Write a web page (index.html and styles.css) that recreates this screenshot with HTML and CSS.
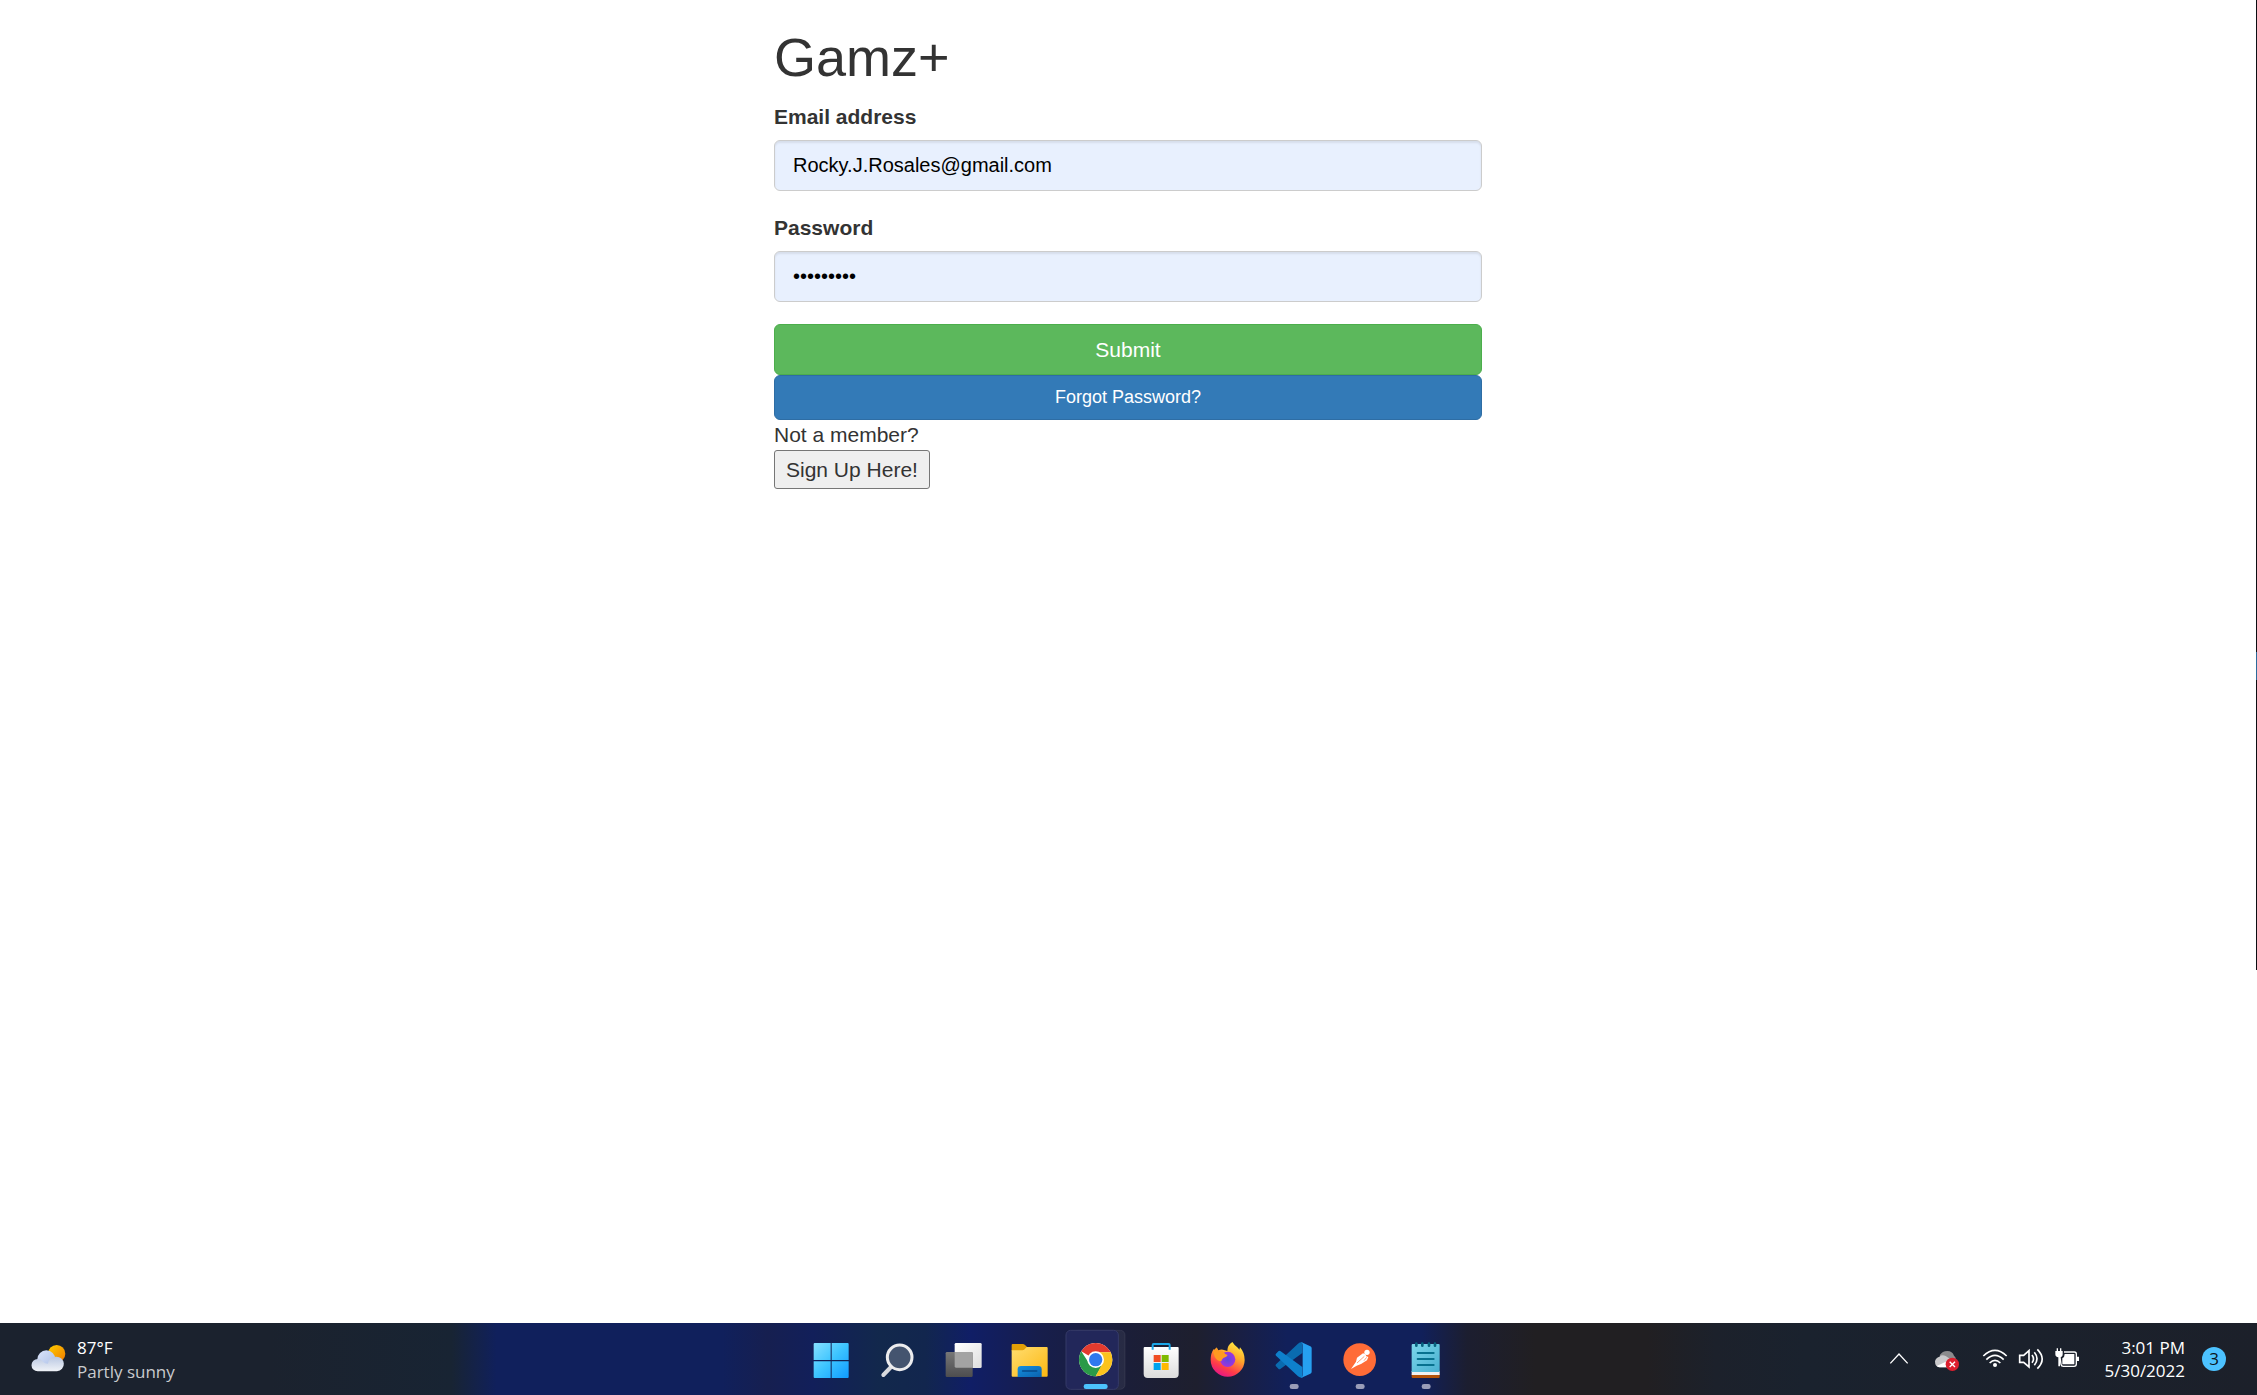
FILE: index.html
```html
<!DOCTYPE html>
<html lang="en">
<head>
<meta charset="utf-8">
<title>Gamz+</title>
<link rel="stylesheet" href="styles.css">
</head>
<body>
<main class="page">
  <div class="column">
    <h1 class="title">Gamz+</h1>
    <form class="login">
      <div class="form-group">
        <label for="email">Email address</label>
        <input class="form-control" id="email" type="email" value="Rocky.J.Rosales@gmail.com">
      </div>
      <div class="form-group">
        <label for="password">Password</label>
        <input class="form-control" id="password" type="password" value="password1">
      </div>
      <button class="btn btn-success" type="button">Submit</button>
      <button class="btn btn-primary" type="button">Forgot Password?</button>
    </form>
    <p class="note">Not a member?</p>
    <button class="signup" type="button">Sign Up Here!</button>
  </div>
  <div class="edge"></div>
</main>

<footer class="taskbar">
  <div class="weather">
    <svg class="weather-icon" viewBox="0 0 108 84" aria-hidden="true">
      <defs>
        <linearGradient id="sun" x1="0" y1="0" x2="1" y2="1"><stop offset="0" stop-color="#ffd000"/><stop offset="1" stop-color="#f07800"/></linearGradient>
        <linearGradient id="cloud" x1="0" y1="0" x2="1" y2="1"><stop offset="0" stop-color="#dbe5fa"/><stop offset="1" stop-color="#a9bde6"/></linearGradient>
        <linearGradient id="puff" x1="0" y1="0" x2="0" y2="1"><stop offset="0" stop-color="#b9c7e2"/><stop offset="1" stop-color="#f0f3f8"/></linearGradient>
      </defs>
      <circle cx="77" cy="26" r="26" fill="url(#sun)"/>
      <circle cx="46" cy="43" r="27" fill="url(#cloud)"/>
      <path d="M20 42a19 19 0 0 1 17 9q4 5 14 5 3-21 24-21a22 22 0 0 1 3 44H20a18 18 0 0 1 0-37z" fill="url(#puff)"/>
    </svg>
    <div class="weather-text"><span>87°F</span><span class="dim">Partly sunny</span></div>
  </div>

  <nav class="apps">
    <button class="app" type="button" aria-label="Start">
      <svg viewBox="25 24 198 216">
        <defs><linearGradient id="win" gradientUnits="userSpaceOnUse" x1="72" y1="84" x2="177" y2="189"><stop offset="0" stop-color="#86e0ff"/><stop offset=".5" stop-color="#3cc4ff"/><stop offset="1" stop-color="#0f9bff"/></linearGradient></defs>
        <path fill="url(#win)" d="M75 84h48v51H72V87a3 3 0 0 1 3-3zM126 84h48a3 3 0 0 1 3 3v48h-51zM72 139h51v50H75a3 3 0 0 1-3-3zM126 139h51v47a3 3 0 0 1-3 3h-48z"/>
      </svg>
    </button>
    <button class="app" type="button" aria-label="Search">
      <svg viewBox="223 24 198 216">
        <path d="M304 156l-23 24" stroke="#d8dade" stroke-width="12" stroke-linecap="round"/>
        <circle cx="330" cy="127" r="37" fill="#44546f" stroke="#ececee" stroke-width="9"/>
      </svg>
    </button>
    <button class="app" type="button" aria-label="Task view">
      <svg viewBox="421 24 198 216">
        <defs><linearGradient id="tvb" x1="0" y1="0" x2="0" y2="1"><stop offset="0" stop-color="#777"/><stop offset="1" stop-color="#4d4d4f"/></linearGradient>
        <linearGradient id="tvf" x1="0" y1="0" x2="1" y2="1"><stop offset="0" stop-color="#fff"/><stop offset="1" stop-color="#dedede"/></linearGradient></defs>
        <rect x="495" y="84" width="81" height="75" rx="4" fill="url(#tvf)"/>
        <rect x="468" y="111" width="81" height="75" rx="4" fill="url(#tvb)"/>
        <path d="M495 111h51a3 3 0 0 1 3 3v44h-50a4 4 0 0 1-4-4z" fill="#a3a3a3"/>
      </svg>
    </button>
    <button class="app" type="button" aria-label="File Explorer">
      <svg viewBox="619 24 198 216">
        <defs><linearGradient id="fold" x1="0" y1="0" x2="1" y2="1"><stop offset="0" stop-color="#ffdd70"/><stop offset="1" stop-color="#fcb812"/></linearGradient>
        <linearGradient id="tray" x1="0" y1="0" x2="1" y2="1"><stop offset="0" stop-color="#1490df"/><stop offset="1" stop-color="#0b61ad"/></linearGradient></defs>
        <path d="M666 90q0-3 3-3h30q4 0 7 3l7 7v12h-47z" fill="#e29f06"/>
        <path d="M666 106h32q4 0 7-3l6-7h60q3 0 3 3v83q0 3-3 3H669q-3 0-3-3z" fill="url(#fold)"/>
        <path d="M684 186v-23q0-10 10-10h52q10 0 10 10v23z" fill="url(#tray)"/>
        <path d="M699 168h42" stroke="#064a8a" stroke-width="5" stroke-linecap="round"/>
      </svg>
    </button>
    <button class="app" type="button" aria-label="Chrome">
      <svg viewBox="817 24 198 216">
        <rect x="850" y="46" width="156" height="177" rx="14" fill="#fff" fill-opacity=".06" stroke="#fff" stroke-opacity=".07" stroke-width="3"/>
        <rect x="829" y="46" width="157" height="177" rx="14" fill="#22275a" stroke="#353a68" stroke-width="3"/>
        <circle cx="918" cy="134" r="50" fill="#fff"/>
        <path d="M918 134L874.700 109A50 50 0 0 1 961.300 109L964 112H918z" fill="#e33b2e"/>
        <path d="M874.700 109A50 50 0 0 0 918 184L940 146 918 134 899 146z" fill="#2a9a48"/>
        <path d="M918 112h45A50 50 0 0 1 918 184L938 146z" fill="#fcc31e"/>
        <circle cx="918" cy="134" r="25" fill="#fff"/><circle cx="918" cy="134" r="20" fill="#2f78ee"/>
        <rect x="882" y="207" width="72" height="15" rx="7" fill="#4cc2ff"/>
      </svg>
    </button>
    <button class="app" type="button" aria-label="Microsoft Store">
      <svg viewBox="25 24 198 216">
        <defs><linearGradient id="bag" x1="0" y1="0" x2="0" y2="1"><stop offset="0" stop-color="#fff"/><stop offset="1" stop-color="#dcdcdc"/></linearGradient></defs>
        <path d="M75 96h99q3 0 3 3v78q0 12-12 12H84q-12 0-12-12V99q0-3 3-3z" fill="url(#bag)"/>
        <path d="M99 104V90q0-3 3-3h45q3 0 3 3v14" fill="none" stroke="#1ba7e8" stroke-width="6"/>
        <path d="M102 120h21v21h-21z" fill="#f04e23"/><path d="M126 120h21v21h-21z" fill="#7fba00"/>
        <path d="M102 144h21v21h-21z" fill="#00a3ee"/><path d="M126 144h21v21h-21z" fill="#ffb900"/>
      </svg>
    </button>
    <button class="app" type="button" aria-label="Firefox">
      <svg viewBox="223 24 198 216">
        <defs><linearGradient id="fx" x1=".8" y1="0" x2=".3" y2="1"><stop offset="0" stop-color="#fff044"/><stop offset=".4" stop-color="#ffa62a"/><stop offset=".75" stop-color="#ff3c48"/><stop offset="1" stop-color="#e4148a"/></linearGradient>
        <radialGradient id="fxg"><stop offset="0" stop-color="#5b48e0"/><stop offset="1" stop-color="#a034dc"/></radialGradient></defs>
        <path d="M338 81q6 9 14 15 4 3 7 8l2-7q14 16 14 38a51 50 0 0 1-102 0q0-22 10-34l2 6 6-10 5 9q6-3 14-2l13 4q0-18 15-27z" fill="url(#fx)"/>
        <circle cx="324" cy="133" r="23" fill="url(#fxg)"/>
        <path d="M280 108l9-9 7 9q10-2 16 3 3 7 12 9-2 6-13 9-5 4-6 10-14-2-20-14z" fill="#ff9a20"/>
      </svg>
    </button>
    <button class="app" type="button" aria-label="Visual Studio Code">
      <svg viewBox="421 24 198 216">
        <path d="M548 82v32l-65 47q-4 3-7 0l-7-7q-3-3 0-6l66-62q6-5 13-4z" fill="#0a6bb0"/>
        <path d="M548 188v-32l-65-47q-4-3-7 0l-7 7q-3 3 0 6l66 62q6 5 13 4z" fill="#0e80cc"/>
        <path d="M544 81l28 13q4 2 4 6v70q0 4-4 6l-28 13q5-3 5-8V89q0-5-5-8z" fill="#26a0f0"/>
        <rect x="510" y="207" width="27" height="15" rx="7" fill="#9a9db8"/>
      </svg>
    </button>
    <button class="app" type="button" aria-label="Postman">
      <svg viewBox="619 24 198 216">
        <circle cx="720" cy="134" r="49" fill="#ff6c37"/>
        <circle cx="742" cy="112" r="8" fill="#fff"/>
        <path d="M712 128l18-13 7 2 3 7 6 2-4 10-18 11-13 5-17 10 15-22z" fill="#fff"/>
        <path d="M712 144l22-20M733 137l8-10" stroke="#ff6c37" stroke-width="2"/>
        <rect x="708" y="207" width="27" height="15" rx="7" fill="#9a9db8"/>
      </svg>
    </button>
    <button class="app" type="button" aria-label="Notepad">
      <svg viewBox="817 24 198 216">
        <defs><linearGradient id="note" x1="0" y1="0" x2="1" y2="1"><stop offset="0" stop-color="#7cd6ea"/><stop offset="1" stop-color="#48afd0"/></linearGradient></defs>
        <path d="M876 176h84v10q0 3-3 3h-78q-3 0-3-3z" fill="#b45309"/><path d="M876 168h84v12h-84z" fill="#f0f0f0"/>
        <path d="M876 90q0-3 3-3h78q3 0 3 3v81h-84z" fill="url(#note)"/>
        <path d="M894 114h48M894 132h48M894 150h48" stroke="#08718f" stroke-width="6" stroke-linecap="round"/>
        <path d="M890 86v6M908 86v6M928 86v6M946 86v6" stroke="#07627e" stroke-width="8" stroke-linecap="round"/>
        <rect x="906" y="207" width="27" height="15" rx="7" fill="#9a9db8"/>
      </svg>
    </button>
  </nav>

  <div class="tray">
    <svg class="chevron" viewBox="84 93 66 78" fill="none" stroke="#fff" stroke-width="4"><path d="M91 145l26-28 26 28"/></svg>
    <svg class="tray-icon" viewBox="222 93 78 78">
      <path d="M239 121q8-13 23-13 15 0 20 14 6 3 6 14h-40z" fill="#8b8b8d"/>
      <path d="M237 157q-12-2-12-18 2-11 13-14 8-7 19-2l22 14-8 20z" fill="#c9c9cb"/>
      <path d="M230 153l34-16 10 20h-34q-6 0-10-4z" fill="#fff"/>
      <circle cx="277" cy="148" r="20" fill="#dc1f2e"/><path d="M269 140l16 16M285 140l-16 16" stroke="#fff" stroke-width="4"/>
    </svg>
    <div class="status">
      <svg class="tray-icon" viewBox="366 93 78 78" fill="none" stroke="#fff" stroke-width="5"><path d="M370 123q35-34 70 0M379 134q26-26 52 0M389 144q16-16 32 0"/><circle cx="405" cy="150" r="6" fill="#fff" stroke="none"/></svg>
      <svg class="tray-icon" viewBox="474 93 78 78" fill="none" stroke="#fff" stroke-width="5"><path d="M479 121h12l16-14v49l-16-14h-12zM516 120q9 12 0 23M523 112q16 19 0 39M532 103q29 29 0 58"/></svg>
      <svg class="tray-icon" viewBox="582 93 78 78"><path d="M612 111h31q6 0 6 6v30q0 7-7 7h-32q-6 0-7-6l-3-22" fill="none" stroke="#fff" stroke-width="4"/><path d="M614 117h29v31h-36v-18q7-3 7-13z" fill="#fff"/><path d="M651 125h6v13h-6zM586 108h22v10q0 8-8 9v27h-5v-27q-9-1-9-9zM590 100h4v9h-4zM600 100h4v9h-4z" fill="#fff"/></svg>
    </div>
    <div class="clock"><span>3:01 PM</span><span>5/30/2022</span></div>
    <span class="badge">3</span>
  </div>
</footer>
</body>
</html>
```
FILE: styles.css
```css
* { box-sizing: border-box; }

body {
  margin: 0;
  min-height: 100vh;
  display: flex;
  flex-direction: column;
  background: #fff;
  color: #333;
  font: 21px/30px "Liberation Sans", Arial, sans-serif;
}

.page {
  flex: 1;
  position: relative;
  padding: 28px 1px 0 0;
}

.column {
  width: 33.333%;
  margin: 0 auto;
  padding: 0 22px;
}

.title {
  margin: 0 0 15px;
  font-size: 54px;
  font-weight: 400;
  line-height: 59px;
}

.form-group { margin-bottom: 22px; }

.form-group label {
  display: block;
  margin-bottom: 8px;
  font-weight: 700;
}

.form-control {
  display: block;
  width: 100%;
  height: 51px;
  padding: 8px 18px;
  border: 1px solid #ccc;
  border-radius: 6px;
  background: #e8f0fe;
  box-shadow: inset 0 2px 2px rgba(0, 0, 0, .075);
  color: #000;
  font: 20px/30px "Liberation Sans", Arial, sans-serif;
}

.btn {
  display: block;
  width: 100%;
  border: 1px solid;
  border-radius: 6px;
  color: #fff;
  font-family: inherit;
}

.btn-success {
  height: 51px;
  border-color: #4cae4c;
  background: #5cb85c;
  font-size: 21px;
}

.btn-primary {
  height: 45px;
  border-color: #2e6da4;
  background: #337ab7;
  font-size: 18px;
}

.note { margin: 0; }

.signup {
  display: block;
  height: 39px;
  padding: 0 11px;
  border: 1px solid #767676;
  border-radius: 3px;
  background: #efefef;
  color: #333;
  font: inherit;
}

/* sliver of the neighbouring display at the right edge */
.edge {
  position: absolute;
  top: 0;
  right: 0;
  width: 1px;
  height: 970px;
  background: linear-gradient(#0b0d12 652px, #2b6a9b 652px, #2b6a9b 680px, #0b0d12 680px);
}

.taskbar {
  display: grid;
  grid-template-columns: 1fr auto 1fr;
  align-items: center;
  height: 72px;
  padding-right: 1px;
  color: #fff;
  font: 17px/24px "Open Sans", "Noto Sans", sans-serif;
  background: linear-gradient(90deg, #1b222e 0%, #1b222e 12%, #182433 20%, #10205c 22%, #10205c 32%, #161f50 34%, #121f5a 36%, #12284c 39%, #12264e 41%, #101e66 43%, #171e4c 46%, #1b1e38 50%, #1e1f2e 53%, #191f44 55%, #11205a 57%, #11205a 63%, #1c1e30 65%, #211f22 68%, #211f22 73%, #1c212b 76%, #1a222e 80%, #1c202a 100%);
}

.weather {
  display: flex;
  align-items: center;
  gap: 10px;
  padding-left: 31px;
}

.weather-icon { width: 36px; height: 28px; }

.weather-text, .clock {
  display: flex;
  flex-direction: column;
}

.weather-text { padding-top: 2px; }

.dim { color: #c8cacd; }

.apps { display: flex; }

.app {
  width: 66px;
  height: 72px;
  padding: 0;
  border: 0;
  background: none;
}

.app svg { display: block; width: 66px; height: 72px; }

.tray {
  display: flex;
  align-items: center;
  justify-content: flex-end;
  gap: 22px;
  padding-right: 30px;
}

.chevron { width: 22px; height: 26px; margin-right: 2px; }
.tray-icon { width: 26px; height: 26px; }
.status { display: flex; gap: 10px; }

.clock {
  min-width: 83px;
  text-align: right;
  line-height: 23px;
}

.badge {
  width: 24px;
  height: 24px;
  margin-left: -5px;
  border-radius: 50%;
  background: #4cc2ff;
  color: #0b1420;
  text-align: center;
}
```
